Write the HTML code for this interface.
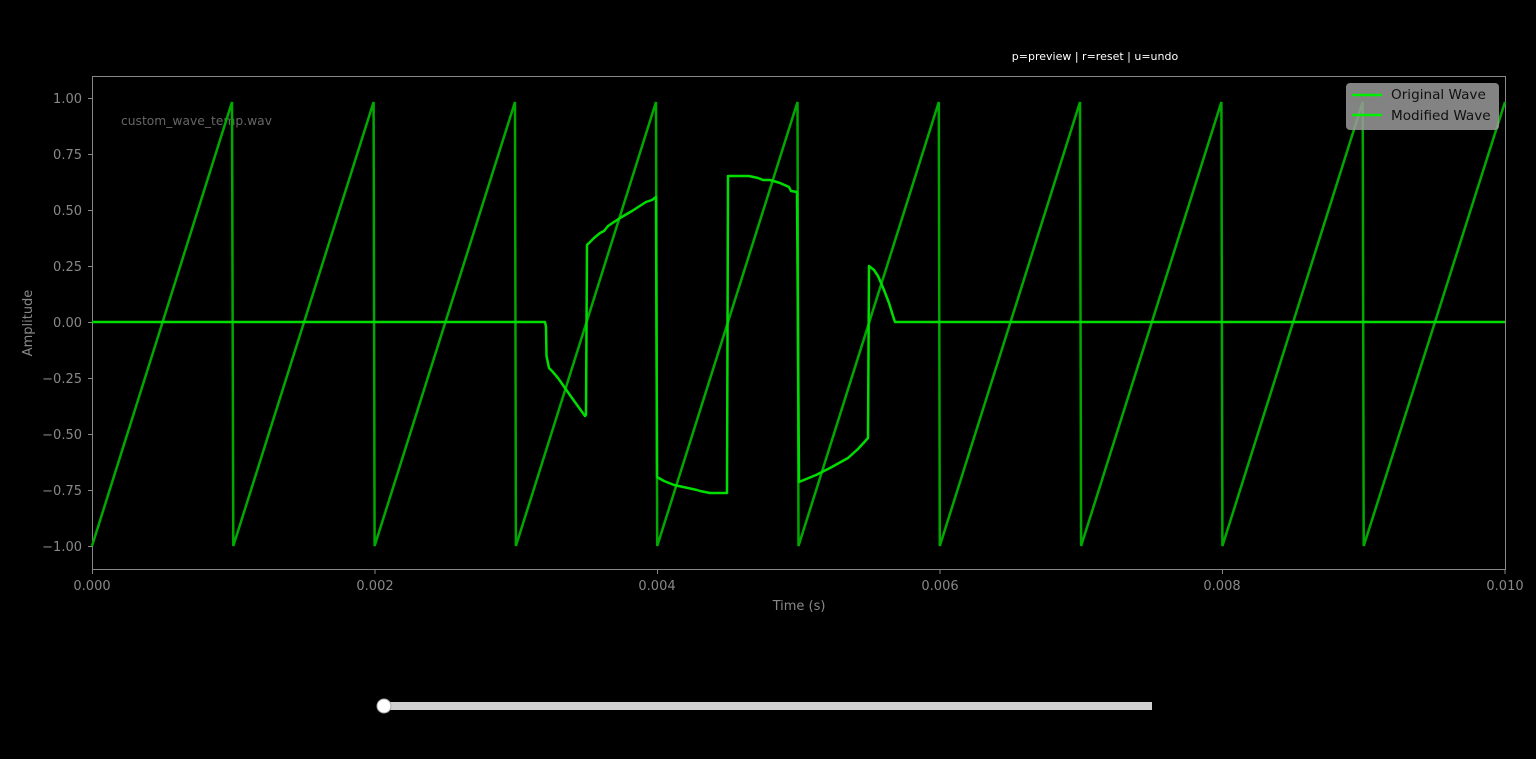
<!DOCTYPE html>
<html><head><style>
body{margin:0;background:#000;width:1536px;height:759px;overflow:hidden;font-family:"DejaVu Sans","Liberation Sans",sans-serif}
</style></head><body>
<svg width="1536" height="759" xmlns="http://www.w3.org/2000/svg" font-family="DejaVu Sans, Liberation Sans, sans-serif" style="display:block">
<rect width="1536" height="759" fill="#000"/>
<text x="1095" y="60" fill="#fff" font-size="11" text-anchor="middle">p=preview | r=reset | u=undo</text>
<rect x="92.5" y="76.5" width="1413" height="493" fill="none" stroke="#888" stroke-width="1"/>
<g fill="#888" font-size="13" text-anchor="end">
<text x="82" y="103">1.00</text><text x="82" y="159">0.75</text><text x="82" y="215">0.50</text>
<text x="82" y="271">0.25</text><text x="82" y="327">0.00</text><text x="82" y="383">−0.25</text>
<text x="82" y="439">−0.50</text><text x="82" y="495">−0.75</text><text x="82" y="551">−1.00</text>
</g>
<g stroke="#888"><line x1="88" x2="92" y1="98.5" y2="98.5"/><line x1="88" x2="92" y1="154.5" y2="154.5"/><line x1="88" x2="92" y1="210.5" y2="210.5"/><line x1="88" x2="92" y1="266.5" y2="266.5"/><line x1="88" x2="92" y1="322.5" y2="322.5"/><line x1="88" x2="92" y1="378.5" y2="378.5"/><line x1="88" x2="92" y1="434.5" y2="434.5"/><line x1="88" x2="92" y1="490.5" y2="490.5"/><line x1="88" x2="92" y1="546.5" y2="546.5"/>
<line x1="92.5" x2="92.5" y1="570" y2="574"/><line x1="375" x2="375" y1="570" y2="574"/><line x1="657.5" x2="657.5" y1="570" y2="574"/><line x1="940" x2="940" y1="570" y2="574"/><line x1="1222.5" x2="1222.5" y1="570" y2="574"/><line x1="1505" x2="1505" y1="570" y2="574"/></g>
<g fill="#888" font-size="13" text-anchor="middle">
<text x="92" y="590">0.000</text><text x="375" y="590">0.002</text><text x="657" y="590">0.004</text><text x="940" y="590">0.006</text><text x="1222" y="590">0.008</text><text x="1505" y="590">0.010</text>
<text x="799" y="610">Time (s)</text>
<text transform="translate(32,323) rotate(-90)">Amplitude</text>
</g>
<text x="121" y="125" fill="#666" font-size="12.3">custom_wave_temp.wav</text>
<path fill="none" stroke="#00a800" stroke-width="2.5" d="M92 546 L232 102 L233.3 546 L373.6 102 L374.6 546 L515 102 L515.9 546 L656 102 L657.2 546 L797.5 102 L798.5 546 L938.8 102 L939.8 546 L1080 102 L1081.1 546 L1221.4 102 L1222.4 546 L1362.7 102 L1363.7 546 L1505 102"/>
<path fill="none" stroke="#00dd00" stroke-width="2.5" stroke-linejoin="round" d="M92 322 L545 322 L546 327 L546.5 356 L549 368 L552 371 L558 378 L572 398 L585 416 L586 415 L587 245 L594 238 L600 233 L604 231 L608 226 L620 218 L632 211 L646 202 L652 200 L656 197 L657 477 L664 481 L674 485 L697 490 L700 491 L710 493 L727 493 L728 176 L749 176 L758 178 L763 180 L770 180 L780 183 L789 187 L791 191 L797 192 L799 482 L816 475 L830 468 L848 458 L858 449 L868 438 L869 266 L874 270 L878 276 L884 290 L889 303 L893 316 L895 322 L1505 322"/>
<rect x="1346" y="83" width="153" height="47" rx="4" fill="#9a9a9a" fill-opacity="0.85"/>
<line x1="1352" x2="1382" y1="95" y2="95" stroke="#00ee00" stroke-width="2.5"/>
<line x1="1352" x2="1382" y1="115" y2="115" stroke="#00ee00" stroke-width="2.5"/>
<g fill="#111" font-size="13.6"><text x="1391" y="99">Original Wave</text><text x="1391" y="120">Modified Wave</text></g>
<rect x="384" y="702" width="768" height="8" fill="#d0d0d0"/>
<circle cx="384" cy="706" r="7" fill="#fff" stroke="#aaa" stroke-width="1"/>
</svg>
</body></html>
